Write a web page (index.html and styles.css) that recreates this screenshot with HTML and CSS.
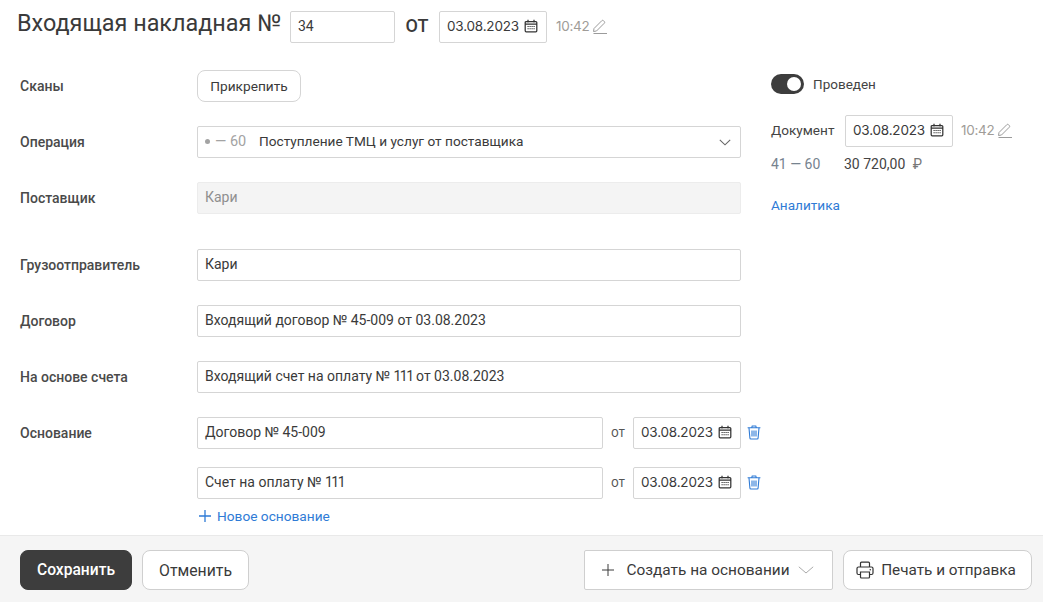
FILE: index.html
```html
<!DOCTYPE html>
<html lang="ru">
<head>
<meta charset="utf-8">
<title>Входящая накладная</title>
<link rel="stylesheet" href="styles.css">
</head>
<body>
<svg class="defs" width="0" height="0" aria-hidden="true">
  <symbol id="cal" viewBox="0 0 14 14">
    <path d="M2.2 2.5h9.6a1 1 0 0 1 1 1v8.3a1 1 0 0 1-1 1H2.2a1 1 0 0 1-1-1V3.500a1 1 0 0 1 1-1zM1.200 5h11.600M4 .8v2.600M10 .8v2.600" fill="none" stroke="currentColor" stroke-width="1.250"/>
    <path d="M3.500 7h1.200v1H3.500zM5.500 7h1.200v1H5.500zM7.500 7h1.200v1H7.500zM9.500 7h1.200v1H9.500zM3.500 9.300h1.200v1H3.500zM5.500 9.300h1.200v1H5.500zM7.500 9.300h1.200v1H7.500zM9.500 9.300h1.200v1H9.500z" fill="currentColor"/>
  </symbol>
  <symbol id="pen" viewBox="0 0 16 16">
    <path d="M1.500 12.500 2 9.500 9.800 1.700a1.200 1.200 0 0 1 1.700 0l.8.8a1.200 1.200 0 0 1 0 1.700L4.500 12zM1.500 14.500h13.500" fill="none" stroke="currentColor" stroke-width="1"/>
  </symbol>
  <symbol id="trash" viewBox="0 0 14 15">
    <path d="M.6 2.800h12.800M4.700 2.600 5.200 1h3.600l.5 1.600M2 3l.9 10a1 1 0 0 0 1 1h6.200a1 1 0 0 0 1-1L12 3M5 5.500v6M7 5.500v6M9 5.500v6" fill="none" stroke="currentColor" stroke-width="1.100"/>
  </symbol>
</svg>
<div class="page">
  <header class="head">
    <h1 class="title">Входящая накладная №</h1>
    <div class="box num">34</div>
    <span class="ot-big">от</span>
    <div class="box date"><span>03.08.2023</span><svg class="ico-cal"><use href="#cal"/></svg></div>
    <span class="time">10:42</span><svg class="ico-pen"><use href="#pen"/></svg>
  </header>
  <main class="main">
    <div class="form">
      <div class="row"><div class="label">Сканы</div><button class="btn-attach">Прикрепить</button></div>
      <div class="row"><div class="label">Операция</div>
        <div class="box field select"><span class="code"><span class="dot"></span>— 60</span><span class="opname">Поступление ТМЦ и услуг от поставщика</span>
          <svg class="chev" viewBox="0 0 12 7"><path d="M.8.8 6 5.800 11.200.8" fill="none" stroke="currentColor" stroke-width="1.100"/></svg></div>
      </div>
      <div class="row"><div class="label">Поставщик</div><div class="box field disabled">Кари</div></div>
      <div class="row sep"><div class="label">Грузоотправитель</div><div class="box field">Кари</div></div>
      <div class="row"><div class="label">Договор</div><div class="box field">Входящий договор № 45-009 от 03.08.2023</div></div>
      <div class="row"><div class="label">На основе счета</div><div class="box field"><span>Входящий счет на оплату № <span class="narrow">111</span> от 03.08.2023</span></div></div>
      <div class="row"><div class="label">Основание</div>
        <div class="basis">
          <div class="box field">Договор № 45-009</div><span class="ot">от</span>
          <div class="box date"><span>03.08.2023</span><svg class="ico-cal"><use href="#cal"/></svg></div>
          <svg class="ico-trash"><use href="#trash"/></svg>
        </div>
      </div>
      <div class="row tight"><div class="label"></div>
        <div class="basis">
          <div class="box field"><span>Счет на оплату № <span class="narrow">111</span></span></div><span class="ot">от</span>
          <div class="box date"><span>03.08.2023</span><svg class="ico-cal"><use href="#cal"/></svg></div>
          <svg class="ico-trash"><use href="#trash"/></svg>
        </div>
      </div>
      <div class="row add"><div class="label"></div>
        <a class="link add-link"><svg class="ico-plus" viewBox="0 0 12 12"><path d="M6 0v12M0 6h12" stroke="currentColor" stroke-width="1.300"/></svg>Новое основание</a>
      </div>
    </div>
    <aside class="side">
      <div class="toggle-row"><span class="toggle"><span class="knob"></span></span><span class="toggle-text">Проведен</span></div>
      <div class="doc-row"><span class="doc-label">Документ</span>
        <div class="box date"><span>03.08.2023</span><svg class="ico-cal"><use href="#cal"/></svg></div>
        <span class="time">10:42</span><svg class="ico-pen"><use href="#pen"/></svg>
      </div>
      <div class="sum-row"><span class="acc">41 — 60</span><span class="sum">30 720,00 <span class="rub">₽</span></span></div>
      <a class="link analytics">Аналитика</a>
    </aside>
  </main>
  <footer class="foot">
    <button class="btn save">Сохранить</button>
    <button class="btn cancel">Отменить</button>
    <button class="btn create"><svg class="ico-plus2" viewBox="0 0 12 12"><path d="M6 0v12M0 6h12" stroke="currentColor" stroke-width="1"/></svg><span>Создать на основании</span><svg class="chev2" viewBox="0 0 16 8"><path d="M.8.8 8 7 15.200.8" fill="none" stroke="currentColor" stroke-width="1"/></svg></button>
    <button class="btn print"><svg class="ico-print" viewBox="0 0 18 18"><path d="M4.500 6V2.200a1 1 0 0 1 1-1h7a1 1 0 0 1 1 1V6M4.500 13.500H2.500a1.500 1.500 0 0 1-1.500-1.500V7.500A1.500 1.500 0 0 1 2.500 6h13A1.500 1.500 0 0 1 17 7.500V12a1.500 1.500 0 0 1-1.500 1.500h-2M4.500 11h9v5a1 1 0 0 1-1 1h-7a1 1 0 0 1-1-1z" fill="none" stroke="currentColor" stroke-width="1.200"/><circle cx="14.300" cy="8.700" r=".8" fill="currentColor"/></svg><span>Печать и отправка</span></button>
  </footer>
</div>
</body>
</html>
```
FILE: styles.css
```css
* { box-sizing: border-box; }
html, body { margin: 0; height: 100%; background: #fff; overflow: hidden; }
body { font-family: Roboto, "Liberation Sans", sans-serif; font-size: 14px; color: #3a3a3a; }
.defs { position: absolute; }
.page { height: 602px; display: flex; flex-direction: column; }
.head { display: flex; align-items: center; height: 54px; padding: 0 0 0 17px; flex: none; }
.title { margin: 0; font-size: 23.400px; font-weight: 400; color: #3a3a3a; width: 273px; white-space: nowrap; position: relative; top: -4px; }
.box { border: 1px solid #d5d5d5; border-radius: 2px; height: 32px; display: flex; align-items: center; padding: 0 8px 2px 7px; background: #fff; font-size: 14px; white-space: nowrap; }
.num { width: 105px; }
.ot-big { width: 44px; text-align: center; font-size: 18px; font-weight: 500; text-transform: uppercase; color: #3a3a3a; position: relative; top: -2px; }
.date { width: 108px; flex: none; justify-content: space-between; font-family: Inter, Roboto, sans-serif; font-size: 13.500px; letter-spacing: -.2px; color: #3a3a3a; }
.ico-cal { width: 14px; height: 14px; color: #333; flex: none; }
.time { margin-left: 9px; color: #a09c98; font-family: Inter, Roboto, sans-serif; font-size: 13.500px; letter-spacing: -.3px; position: relative; top: -1px; }
.ico-pen { width: 16px; height: 16px; color: #9b9b9b; flex: none; margin-left: 3px; }
.main { flex: 1; display: flex; padding: 16px 0 0 20px; min-height: 0; }
.form { width: 721px; flex: none; display: flex; flex-direction: column; gap: 24px; }
.row { display: flex; align-items: center; height: 32px; flex: none; }
.row.sep { margin-top: 11px; }
.row.tight { margin-top: -6px; }
.row.add { margin-top: -16px; height: 18px; }
.label { width: 177px; flex: none; font-weight: 500; font-size: 14px; color: #4a4a4a; }
.btn-attach { width: 104px; height: 32px; border: 1px solid #d5d5d5; border-radius: 8px; background: #fff; font: 13.700px Roboto, sans-serif; color: #3a3a3a; padding: 0 0 1px; }
.field { flex: 1; min-width: 0; }
.narrow { letter-spacing: -1.500px; }
.select { gap: 10px; position: relative; }
.code { color: #a3a3a3; width: 44px; flex: none; font-size: 14.500px; display: flex; align-items: center; white-space: nowrap; }
.dot { width: 5px; height: 5px; border-radius: 50%; background: #a3a3a3; margin-right: 5px; flex: none; }
.opname { color: #3a3a3a; font-size: 13.650px; }
.chev { width: 12px; height: 7px; color: #666; position: absolute; right: 9px; top: 12px; }
.disabled { background: #f4f4f4; border-color: #ececec; color: #8f8f8f; }
.basis { flex: 1; display: flex; align-items: center; min-width: 0; }
.ot { width: 30px; text-align: center; font-family: Inter, Roboto, sans-serif; font-size: 13px; color: #555; flex: none; position: relative; top: -1px; }
.ico-trash { width: 14px; height: 15px; color: #2f7bd6; flex: none; margin: -1px -20px 0 6px; }
.link { color: #2f7bd6; font-size: 14px; }
.add-link { display: flex; align-items: center; gap: 6px; margin-left: 2px; font-size: 13.700px; }
.ico-plus { width: 12px; height: 12px; }
.side { margin-left: 30px; flex: 1; padding-top: 4px; }
.toggle-row { display: flex; align-items: center; height: 20px; margin-bottom: 21px; }
.toggle { width: 33px; height: 20px; border-radius: 10px; background: #3d3d3d; position: relative; display: block; }
.knob { position: absolute; right: 3px; top: 3px; width: 14px; height: 14px; border-radius: 50%; background: #fff; }
.toggle-text { margin-left: 9px; font-size: 13.500px; color: #444; }
.doc-row { display: flex; align-items: center; height: 32px; }
.doc-label { width: 74px; flex: none; font-size: 13.600px; color: #444; position: relative; top: -1px; }
.doc-row .time { margin-left: 8px; }
.sum-row { display: flex; align-items: center; margin-top: 8px; height: 18px; }
.acc { width: 73px; color: #76838f; font-size: 14px; }
.sum { font-size: 14px; color: #444; }
.rub { color: #777; margin-left: 4px; }
.analytics { display: block; margin-top: 24px; font-size: 13.600px; }
.foot { height: 67px; flex: none; background: #f5f5f5; border-top: 1px solid #e9e9e9; display: flex; align-items: center; padding: 2px 11px 0 20px; }
.btn { height: 40px; font: 15.400px Roboto, sans-serif; color: #3a3a3a; border: 1px solid #cfcfcf; background: #fff; display: flex; align-items: center; justify-content: center; padding: 0; }
.save { width: 112px; background: #3d3d3d; border-color: #3d3d3d; color: #fff; border-radius: 8px; font-size: 15.600px; font-weight: 500; }
.cancel { width: 107px; margin-left: 10px; border-radius: 8px; font-size: 15.800px; }
.create { width: 249px; margin-left: auto; border-radius: 2px; padding-right: 1px; }
.ico-plus2 { width: 12px; height: 12px; margin-right: 12px; }
.chev2 { width: 16px; height: 8px; color: #aaa; margin-left: 8px; }
.print { width: 189px; margin-left: 10px; border-radius: 8px; padding-right: 3px; font-size: 15.300px; }
.ico-print { width: 18px; height: 18px; margin-right: 7px; color: #333; }
```
